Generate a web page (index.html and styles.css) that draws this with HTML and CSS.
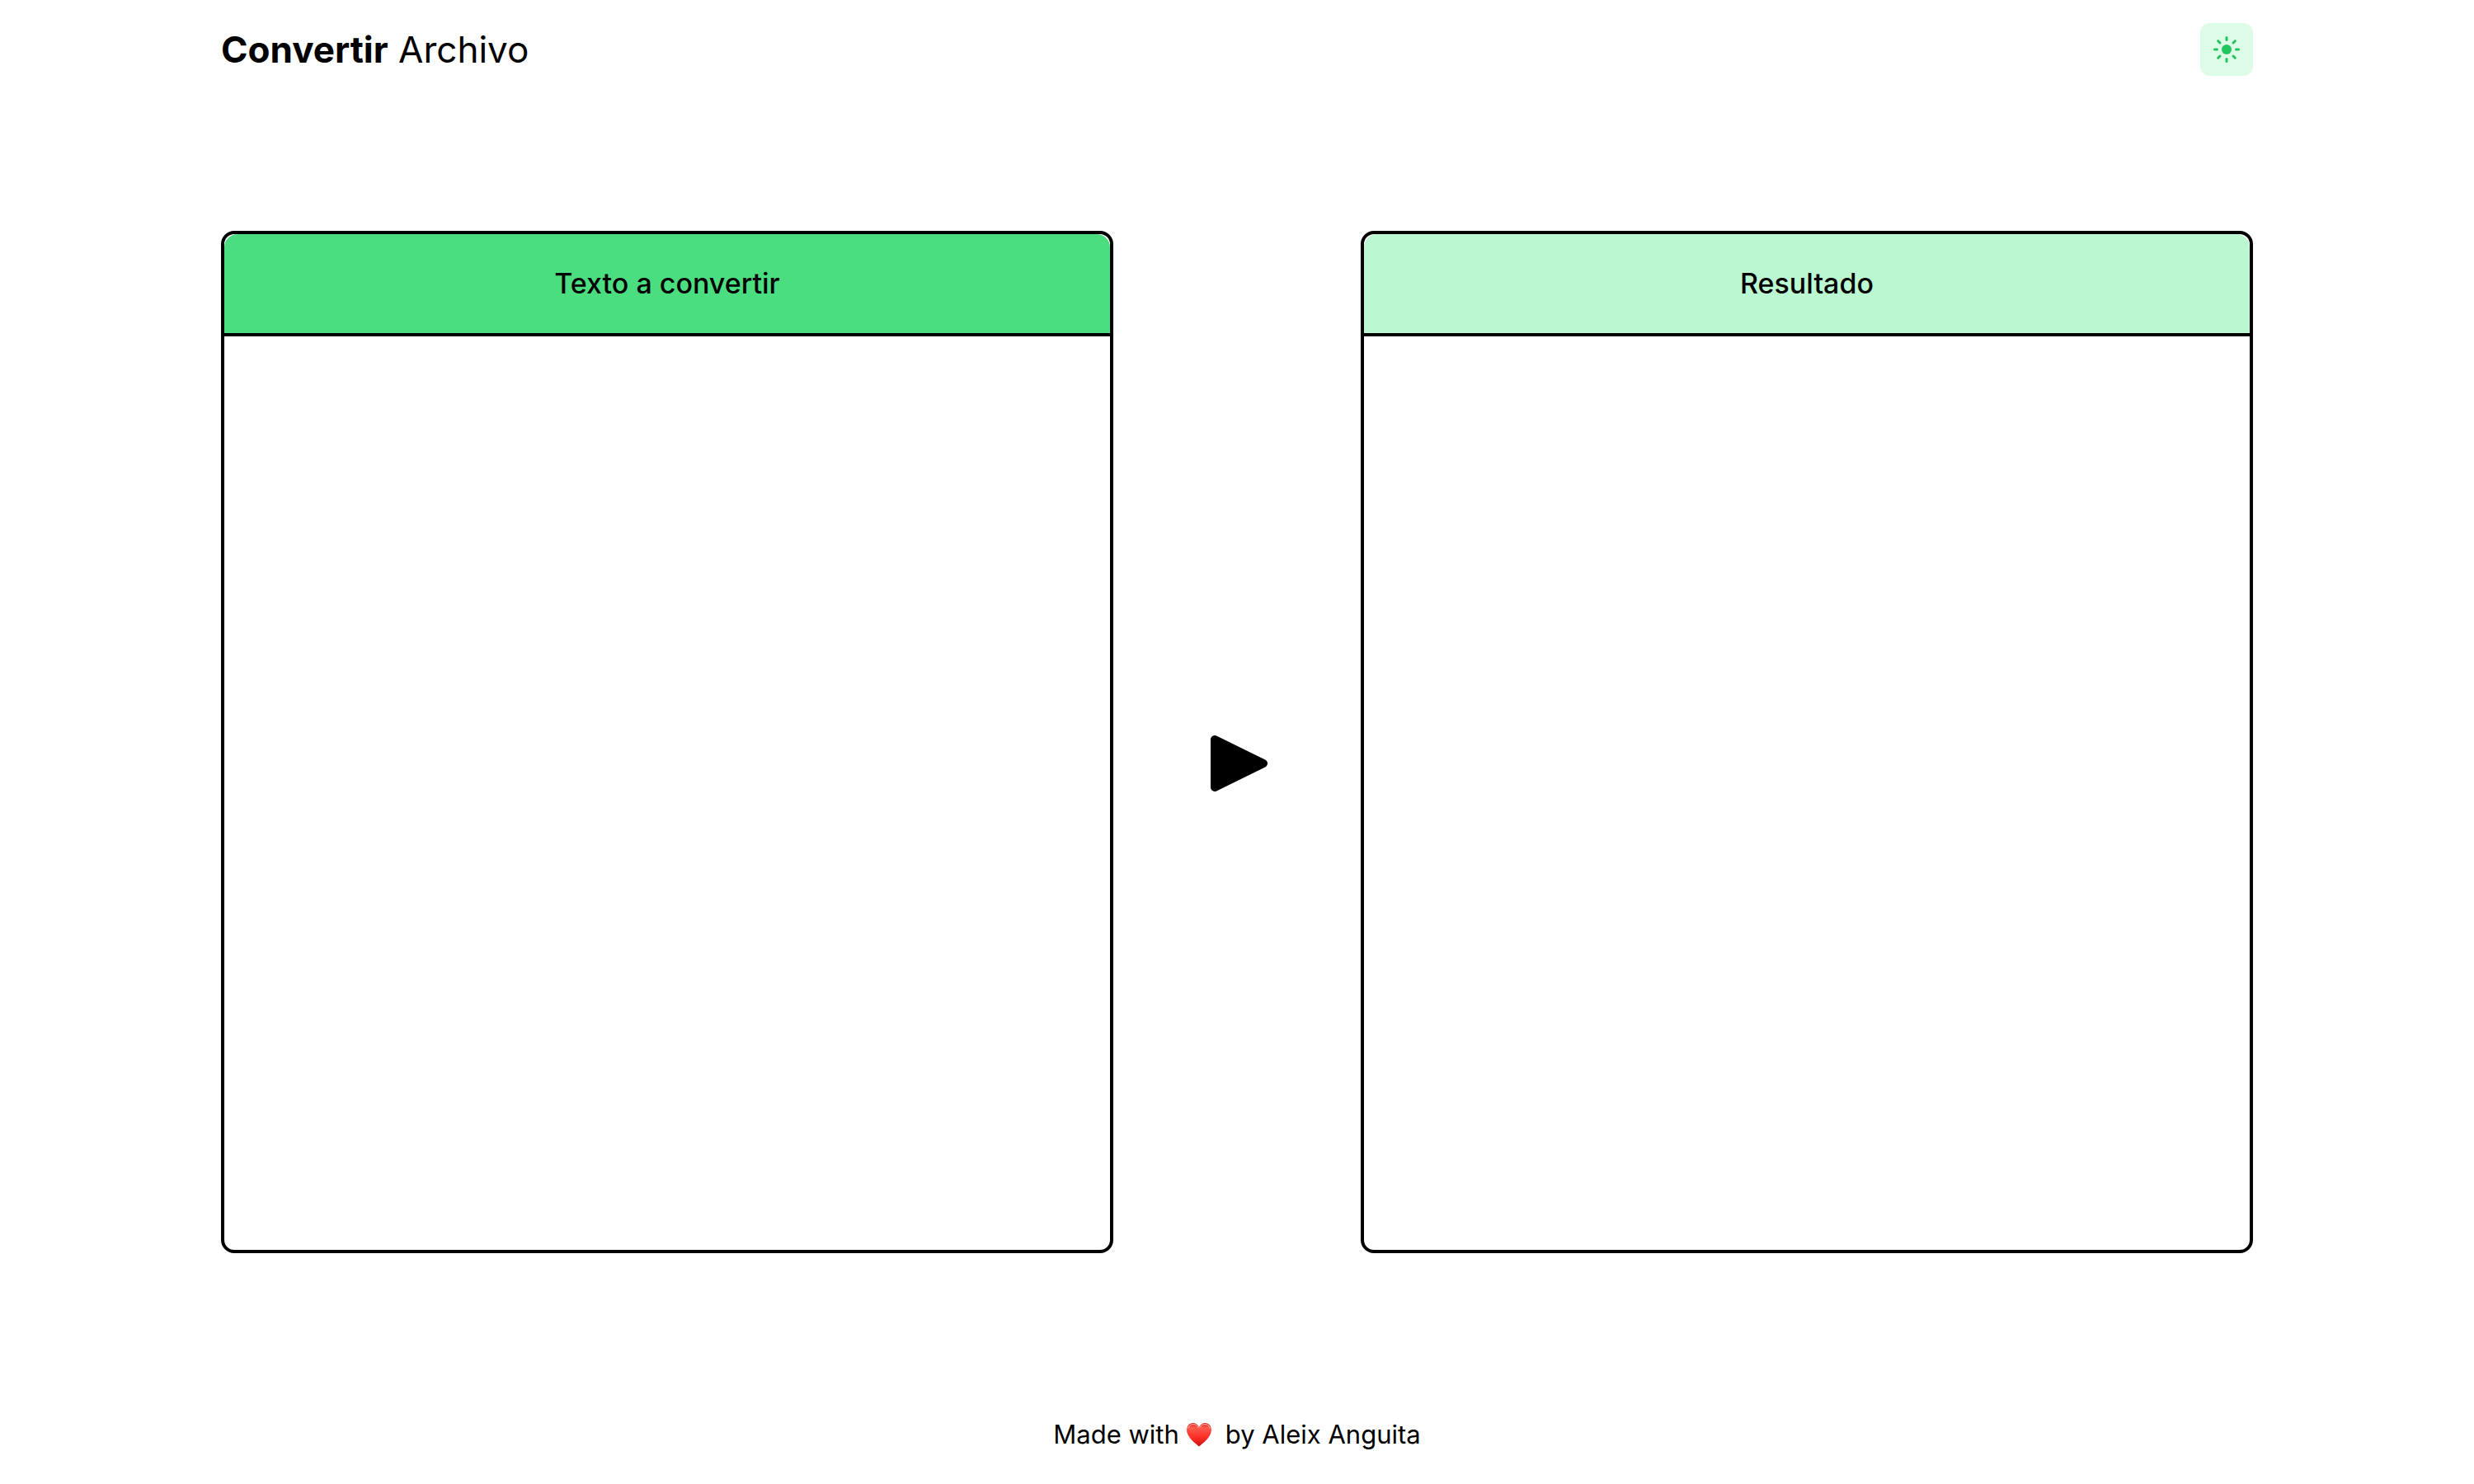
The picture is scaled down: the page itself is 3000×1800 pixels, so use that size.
FILE: index.html
```html
<!DOCTYPE html>
<html lang="es">
<head>
  <meta charset="utf-8">
  <meta name="viewport" content="width=device-width, initial-scale=1">
  <title>Convertir Archivo</title>
  <link rel="stylesheet" href="styles.css">
</head>
<body>
  <header class="site-header container">
    <h1 class="title"><strong>Convertir</strong> Archivo</h1>
    <button class="theme-button" type="button" aria-label="Cambiar tema">
      <svg class="theme-icon" viewBox="-16 -16 32 32" aria-hidden="true">
        <circle r="6" fill="currentColor"/>
        <path d="M0-14.5v3M0 11.5v3M-14.500 0h3M11.500 0h3M-10.300-10.300l2.300 2.300M8 8l2.300 2.300M-10.300 10.300l2.300-2.300M8-8l2.300-2.300" fill="none" stroke="currentColor" stroke-width="3" stroke-linecap="round"/>
      </svg>
    </button>
  </header>

  <main class="converter container">
    <section class="panel">
      <label class="panel-title panel-title-source" for="source">Texto a convertir</label>
      <textarea class="panel-text" id="source"></textarea>
    </section>
    <div class="actions">
      <button class="convert-button" type="button" aria-label="Convertir">
        <svg class="convert-icon" viewBox="0 0 96 96" aria-hidden="true">
          <path d="M21 19v58l59-29z" fill="currentColor" stroke="currentColor" stroke-width="10" stroke-linejoin="round"/>
        </svg>
      </button>
    </div>
    <section class="panel">
      <label class="panel-title panel-title-result" for="result">Resultado</label>
      <textarea class="panel-text" id="result" readonly></textarea>
    </section>
  </main>

  <footer class="site-footer">
    <span>Made with</span>
    <svg class="heart" viewBox="0 0 32 30" role="img" aria-label="amor">
      <defs>
        <linearGradient id="heart-fill" x1="0" y1="0" x2="0" y2="1">
          <stop offset="0" stop-color="#e0201c"/>
          <stop offset=".2" stop-color="#ff5a4e"/>
          <stop offset=".6" stop-color="#fc3027"/>
          <stop offset="1" stop-color="#cc0f12"/>
        </linearGradient>
      </defs>
      <path d="M16 29.500C12 26 1 18 1 9.500 1 4.500 4.500 1 8.500 1 12 1 14.700 3 16 6 17.300 3 20 1 23.500 1 27.500 1 31 4.500 31 9.500 31 18 20 26 16 29.500z" fill="url(#heart-fill)"/>
      <path d="M3 7C4 3.500 6.500 2.500 9 2.500c3 0 5 1.500 6 4M17.500 6c1-2.500 3-3.500 5.500-3.500 3 0 5.500 1.500 6 4.500" fill="none" stroke="#ffb3ad" stroke-width="1" stroke-linecap="round"/>
    </svg>
    <span>by Aleix Anguita</span>
  </footer>
</body>
</html>
```

FILE: styles.css
```css
* {
  box-sizing: border-box;
}

body {
  display: flex;
  flex-direction: column;
  min-height: 100vh;
  margin: 0;
  background: #fff;
  color: #000;
  font-family: Inter, "Liberation Sans", sans-serif;
  font-size: 31px;
  line-height: 48px;
}

.container {
  width: 100%;
  max-width: 2560px;
  margin: 0 auto;
  padding: 0 48px;
}

.site-header {
  display: flex;
  align-items: center;
  justify-content: space-between;
  height: 120px;
}

.title {
  margin: 0;
  font-size: 44px;
  font-weight: 400;
  line-height: 64px;
}

.title strong {
  font-weight: 700;
}

.theme-button {
  display: grid;
  place-items: center;
  width: 64px;
  height: 64px;
  padding: 0;
  border: 0;
  border-radius: 12px;
  background: #dcfce7;
  color: #22c55e;
  cursor: pointer;
}

.theme-icon {
  width: 32px;
  height: 32px;
}

.converter {
  display: grid;
  flex: 1;
  grid-template-columns: minmax(0, 1fr) 300px minmax(0, 1fr);
  padding-top: 160px;
  padding-bottom: 160px;
}

.panel {
  display: flex;
  flex-direction: column;
  border: 4px solid #000;
  border-radius: 16px;
}

.panel-title {
  padding: 32px;
  border-bottom: 4px solid #000;
  border-radius: 16px 16px 0 0;
  font-size: 34px;
  font-weight: 500;
  line-height: 56px;
  text-align: center;
}

.panel-title-source {
  background: #4ade80;
}

.panel-title-result {
  background: #bbf7d0;
}

.panel-text {
  flex: 1;
  width: 100%;
  min-height: 400px;
  padding: 32px;
  border: 0;
  border-radius: 0 0 12px 12px;
  outline: 0;
  background: transparent;
  color: inherit;
  font: inherit;
  resize: none;
}

.actions {
  display: grid;
  place-items: center;
  padding-top: 52px;
}

.convert-button {
  display: block;
  padding: 0;
  border: 0;
  background: none;
  color: inherit;
  cursor: pointer;
}

.convert-icon {
  display: block;
  width: 96px;
  height: 96px;
}

.site-footer {
  display: flex;
  align-items: center;
  justify-content: center;
  gap: 8px;
  height: 120px;
}

.heart {
  width: 32px;
  height: 30px;
  margin-right: 8px;
}
```
